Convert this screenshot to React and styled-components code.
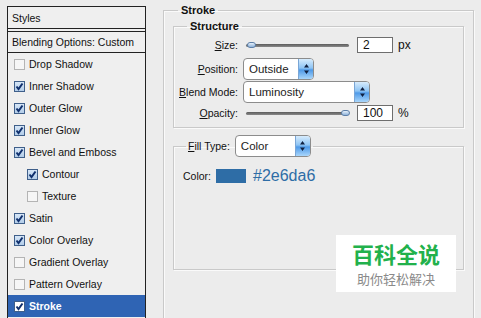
import React from "react";
import styled, { createGlobalStyle } from "styled-components";

const Global = createGlobalStyle`
  html, body {
    margin: 0;
    background: #ececec;
    overflow: hidden;
  }
  body {
    width: 481px;
    height: 318px;
    font-family: "Liberation Sans", Arial, sans-serif;
    font-size: 10.5px;
    color: #111;
  }
`;

const Page = styled.div`
  position: relative;
  display: grid;
  grid-template-columns: 139px 1fr;
  width: 481px;
  height: 318px;
  padding-left: 7px;
  box-sizing: border-box;
  overflow: hidden;
`;

const StylesPanel = styled.div`
  margin-top: 6px;
  height: 340px;
  border: 1px solid #222;
  background: #efefef;
  box-sizing: border-box;
`;

const PanelHead = styled.div`
  height: 21px;
  display: flex;
  align-items: center;
  padding-left: 4px;
  border-bottom: 1px solid #222;
  margin-bottom: 2px;
`;

const BlendRow = styled.div`
  height: 20px;
  display: flex;
  align-items: center;
  padding-left: 4px;
  border-top: 1px solid #222;
  border-bottom: 1px solid #222;
`;

const StyleItem = styled.div`
  height: 22px;
  display: flex;
  align-items: center;
  gap: 4px;
  padding-left: ${(p) => (p.$indent ? 19 : 6)}px;
  background: ${(p) => (p.$active ? "#2f64b4" : "transparent")};
  color: ${(p) => (p.$active ? "#fff" : "#111")};
  font-weight: ${(p) => (p.$active ? 700 : 400)};
`;

const Box = styled.span`
  width: 11px;
  height: 11px;
  box-sizing: border-box;
  display: inline-flex;
  align-items: center;
  justify-content: center;
  border: 1px solid ${(p) => (p.$on ? "#3f5f8a" : "#b4b4b4")};
  background: ${(p) =>
    p.$white ? "#fff" : p.$on ? "linear-gradient(#d6e6f7, #b3cde9)" : "#f6f6f6"};
`;

const RightArea = styled.div`
  padding: 4px 7px 0 17px;
`;

const Group = styled.fieldset`
  margin: ${(p) => p.$top || 0}px 0 0;
  padding: ${(p) => p.$pad || "0 9px"};
  border: 1px solid #c9c9c9;
  box-shadow: inset 1px 1px 0 #fafafa, 1px 1px 0 #fafafa;
  min-width: 0;
  height: ${(p) => (p.$h ? p.$h + "px" : "auto")};
  box-sizing: border-box;
`;

const Legend = styled.legend`
  margin-left: ${(p) => p.$left || 0}px;
  padding: 0 3px;
  line-height: 12px;
  font-size: 11px;
  font-weight: 700;
`;

const FillLegend = styled.legend`
  margin-left: 3px;
  padding: 0 2px;
  display: flex;
  align-items: center;
  gap: 5px;
`;

const Rows = styled.div`
  display: grid;
  grid-template-columns: 64px 1fr;
  column-gap: 5px;
  padding: 5px 0 6px;
  align-items: center;
`;

const Label = styled.div`
  text-align: right;
  height: ${(p) => p.$h || 16}px;
  line-height: ${(p) => p.$h || 16}px;
  margin-top: ${(p) => p.$mt || 0}px;
`;

const Control = styled.div`
  display: flex;
  align-items: center;
  height: ${(p) => p.$h || 16}px;
  margin-top: ${(p) => p.$mt || 0}px;
`;

const Track = styled.div`
  position: relative;
  width: 103px;
  height: 3px;
  margin-left: 3px;
  border-radius: 2px;
  background: linear-gradient(#5c5c5c, #8a8a8a);
`;

const Thumb = styled.span`
  position: absolute;
  top: -2px;
  width: 9px;
  height: 6px;
  border-radius: 4px;
  border: 1px solid #5d7fa8;
  box-sizing: border-box;
  background: linear-gradient(#e6f1fb, #8fb3da);
`;

const Field = styled.div`
  width: 36px;
  height: 16px;
  margin-left: 8px;
  box-sizing: border-box;
  border: 1px solid #6e6e6e;
  background: #fff;
  padding-left: 5px;
  font-size: 12px;
  line-height: 14px;
`;

const Unit = styled.span`
  margin-left: 5px;
  font-size: 12px;
`;

const Select = styled.div`
  width: ${(p) => p.$w}px;
  height: 22px;
  box-sizing: border-box;
  display: flex;
  border: 1px solid #8c8c8c;
  border-radius: 4px;
  background: #fff;
  font-size: 11.5px;
  font-weight: 400;
  color: #222;
  overflow: hidden;
`;

const SelectText = styled.span`
  flex: 1;
  padding-left: 5px;
  line-height: 20px;
`;

const Spinner = styled.span`
  width: 14px;
  display: flex;
  align-items: center;
  justify-content: center;
  border-left: 1px solid #7aa6d6;
  background: linear-gradient(#d7ecfd 0%, #8ec4f4 45%, #4f9ae8 55%, #a9d6fb 100%);
`;

const ColorRow = styled.div`
  display: flex;
  align-items: center;
  margin-top: 10px;
`;

const Swatch = styled.span`
  width: 30px;
  height: 14px;
  margin-left: 5px;
  background: #2e6da6;
`;

const Hex = styled.span`
  margin-left: 7px;
  font-size: 16px;
  color: #2e6da6;
`;

const Watermark = styled.div`
  position: absolute;
  left: 336px;
  top: 235px;
  width: 120px;
  height: 57px;
  background: #fff;
  display: flex;
  flex-direction: column;
  align-items: center;
  justify-content: center;
  gap: 6px;
  font-family: "Noto Sans CJK SC", sans-serif;
`;

const Brand = styled.div`
  font-size: 22px;
  font-weight: 700;
  line-height: 24px;
  color: #22b14c;
`;

const Slogan = styled.div`
  font-size: 13px;
  line-height: 16px;
  color: #8a8a8a;
`;

const Check = ({ on, white }) => (
  <Box $on={on} $white={white}>
    {on && (
      <svg width="9" height="9" viewBox="0 0 9 9">
        <path d="M1.5 4.5 L3.5 7 L7.5 1.5" fill="none" stroke="#10306e" strokeWidth="2" />
      </svg>
    )}
  </Box>
);

const Arrows = () => (
  <svg width="7" height="12" viewBox="0 0 7 12">
    <path d="M3.5 1 L6 4.5 H1 Z M3.5 11 L6 7.5 H1 Z" fill="#102040" />
  </svg>
);

const DropDown = ({ w, value }) => (
  <Select $w={w}>
    <SelectText>{value}</SelectText>
    <Spinner>
      <Arrows />
    </Spinner>
  </Select>
);

const items = [
  { name: "Drop Shadow", on: false },
  { name: "Inner Shadow", on: true },
  { name: "Outer Glow", on: true },
  { name: "Inner Glow", on: true },
  { name: "Bevel and Emboss", on: true },
  { name: "Contour", on: true, indent: true },
  { name: "Texture", on: false, indent: true },
  { name: "Satin", on: true },
  { name: "Color Overlay", on: true },
  { name: "Gradient Overlay", on: false },
  { name: "Pattern Overlay", on: false },
  { name: "Stroke", on: true, active: true },
];

export default function App() {
  return (
    <>
      <Global />
      <Page>
        <StylesPanel>
          <PanelHead>Styles</PanelHead>
          <BlendRow>Blending Options: Custom</BlendRow>
          {items.map((it) => (
            <StyleItem key={it.name} $indent={it.indent} $active={it.active}>
              <Check on={it.on} white={it.active} />
              {it.name}
            </StyleItem>
          ))}
        </StylesPanel>

        <RightArea>
          <Group $h={330}>
            <Legend $left={5}>Stroke</Legend>
            <Group $top={4} $pad="0">
              <Legend $left={13}>Structure</Legend>
              <Rows>
                <Label>
                  <u>S</u>ize:
                </Label>
                <Control>
                  <Track>
                    <Thumb style={{ left: 1 }} />
                  </Track>
                  <Field>2</Field>
                  <Unit>px</Unit>
                </Control>
                <Label $h={22} $mt={5}>
                  <u>P</u>osition:
                </Label>
                <Control $h={22} $mt={5}>
                  <DropDown w={71} value="Outside" />
                </Control>
                <Label $h={22} $mt={1}>
                  <u>B</u>lend Mode:
                </Label>
                <Control $h={22} $mt={1}>
                  <DropDown w={127} value="Luminosity" />
                </Control>
                <Label $mt={2}>
                  <u>O</u>pacity:
                </Label>
                <Control $mt={2}>
                  <Track>
                    <Thumb style={{ left: 95 }} />
                  </Track>
                  <Field>100</Field>
                  <Unit>%</Unit>
                </Control>
              </Rows>
            </Group>
            <Group $top={7} $h={135}>
              <FillLegend>
                <span>
                  <u>F</u>ill Type:
                </span>
                <DropDown w={76} value="Color" />
              </FillLegend>
              <ColorRow>
                Color:
                <Swatch />
                <Hex>#2e6da6</Hex>
              </ColorRow>
            </Group>
          </Group>
        </RightArea>

        <Watermark>
          <Brand>百科全说</Brand>
          <Slogan>助你轻松解决</Slogan>
        </Watermark>
      </Page>
    </>
  );
}
